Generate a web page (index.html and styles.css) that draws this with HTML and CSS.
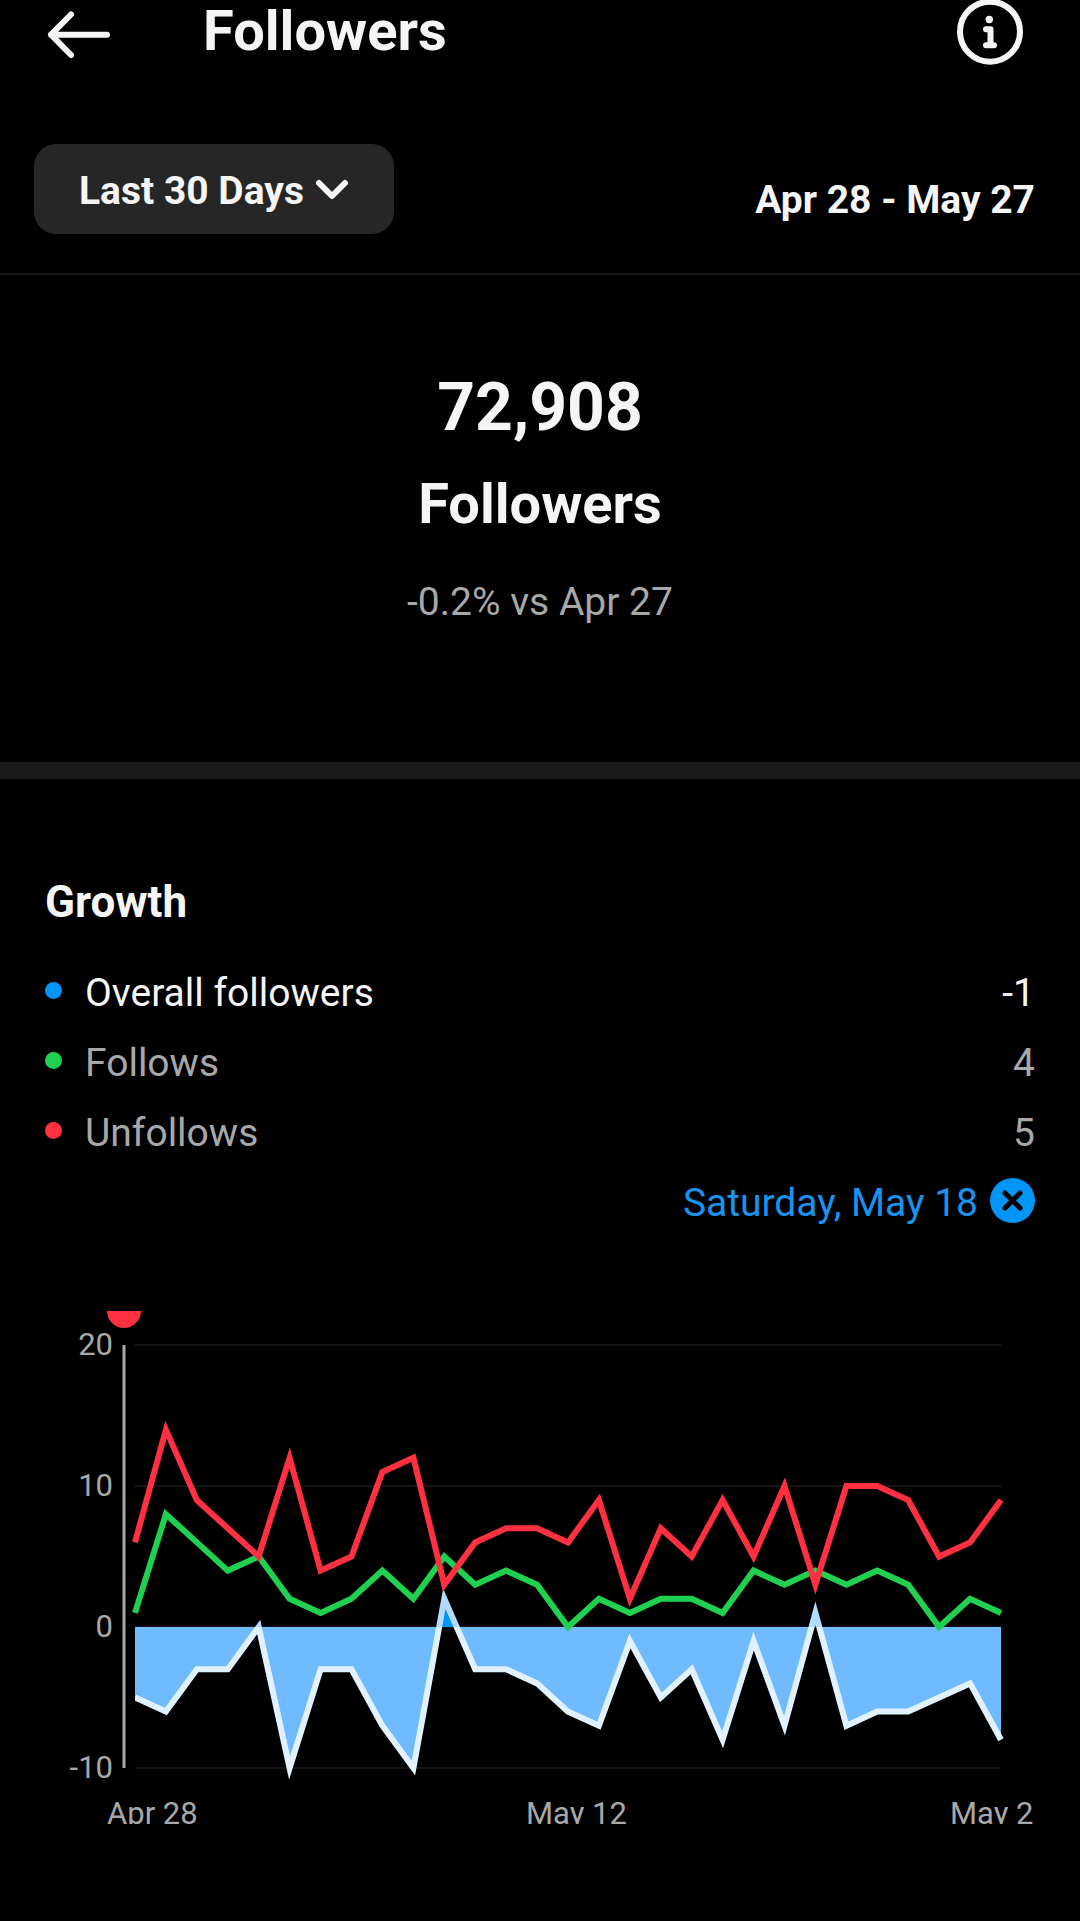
FILE: index.html
```
<!DOCTYPE html>
<html lang="en">
<head>
  <meta charset="UTF-8">
  <meta name="viewport" content="width=device-width, initial-scale=1">
  <title>Followers</title>
  <link rel="stylesheet" href="styles.css">
</head>
<body>
  <header class="topbar">
    <a href="#" class="back" aria-label="Back">
      <svg width="66" height="66" viewBox="0 0 66 66">
        <path d="M26 14.5 L6 34.7 L26 55 M6 34.7 H62"/>
      </svg>
    </a>
    <h1>Followers</h1>
    <button class="info" aria-label="Info">
      <svg width="66" height="66" viewBox="0 0 66 66">
        <circle cx="33" cy="31.7" r="30"/>
        <circle class="dot" cx="32.3" cy="19.5" r="3.7"/>
        <path d="M29 29.3 H33.5 V45 M29 45.3 H37"/>
      </svg>
    </button>
  </header>

  <div class="filter">
    <div class="period">
      <select id="period" aria-label="Period">
        <option>Last 30 Days</option>
      </select>
      <svg class="chevron" width="36" height="24" viewBox="0 0 36 24">
        <path d="M5 5 L18 18 L31 5"/>
      </svg>
    </div>
    <p class="range">Apr 28 - May 27</p>
  </div>

  <section class="summary">
    <p class="total">72,908</p>
    <h2>Followers</h2>
    <p class="change">-0.2% vs Apr 27</p>
  </section>

  <section class="growth">
    <h3>Growth</h3>
    <ul class="legend">
      <li class="active"><span class="bullet blue"></span>Overall followers<span class="value">-1</span></li>
      <li><span class="bullet green"></span>Follows<span class="value">4</span></li>
      <li><span class="bullet red"></span>Unfollows<span class="value">5</span></li>
    </ul>
    <div class="selected">
      <span>Saturday, May 18</span>
      <button class="clear" aria-label="Clear selected day">
        <svg width="45" height="45" viewBox="0 0 45 45">
          <circle cx="22.5" cy="22.5" r="22.5"/>
          <path d="M15 15 L30 30 M30 15 L15 30"/>
        </svg>
      </button>
    </div>

    <svg class="chart" viewBox="0 0 990 513">
      <defs>
        <clipPath id="above"><rect x="90" y="0" width="880" height="316"/></clipPath>
        <clipPath id="below"><rect x="90" y="316" width="880" height="197"/></clipPath>
      </defs>
      <path class="grid" d="M90 34 H956 M90 175 H956 M90 316 H956 M90 457 H956"/>
      <path class="axis" d="M79 34 V457"/>
      <circle class="marker" cx="79" cy="0" r="17"/>

      <g clip-path="url(#above)">
        <polygon class="area-up overall-area"/>
        <polyline class="line-up overall-line"/>
      </g>
      <g clip-path="url(#below)">
        <polygon class="area-down overall-area"/>
        <polyline class="line-down overall-line"/>
      </g>
      <polyline class="line-green" id="follows"/>
      <polyline class="line-red" id="unfollows"/>

      <g class="y-labels">
        <text x="68" y="44">20</text>
        <text x="68" y="185">10</text>
        <text x="68" y="326">0</text>
        <text x="68" y="467">-10</text>
      </g>
      <g class="x-labels">
        <text x="62" y="513">Apr 28</text>
        <text x="481" y="513">May 12</text>
        <text x="905" y="513">May 2</text>
      </g>
    </svg>
  </section>

  <script>
    const follows = [1, 8, 6, 4, 5, 2, 1, 2, 4, 2, 5, 3, 4, 3, 0, 2, 1, 2, 2, 1, 4, 3, 4, 3, 4, 3, 0, 2, 1];
    const unfollows = [6, 14, 9, 7, 5, 12, 4, 5, 11, 12, 3, 6, 7, 7, 6, 9, 2, 7, 5, 9, 5, 10, 3, 10, 10, 9, 5, 6, 9];
    const overall = follows.map((n, i) => n - unfollows[i]);

    // plot area: x 90-956, zero line at y 316, 14.1 per follower
    function points(data) {
      return data.map((n, i) => (90 + i * 866 / (data.length - 1)).toFixed(1) + "," + (316 - n * 14.1).toFixed(1)).join(" ");
    }

    document.getElementById("follows").setAttribute("points", points(follows));
    document.getElementById("unfollows").setAttribute("points", points(unfollows));
    document.querySelectorAll(".overall-line").forEach(function(el) {
      el.setAttribute("points", points(overall));
    });
    document.querySelectorAll(".overall-area").forEach(function(el) {
      el.setAttribute("points", "90,316 " + points(overall) + " 956,316");
    });
  </script>
</body>
</html>
```
FILE: styles.css
```
* {
  box-sizing: border-box;
}
body {
  margin: 0;
  background: #000;
  color: #f5f5f5;
  font-family: Roboto, sans-serif;
  font-size: 39px;
}
h1, h2, h3, p, ul {
  margin: 0;
  padding: 0;
}
button {
  padding: 0;
  border: none;
  background: none;
  cursor: pointer;
}
svg {
  display: block;
}

/* top bar */
.topbar {
  display: flex;
  align-items: flex-start;
  padding: 0 57px 0 45px;
}
.topbar svg {
  overflow: visible;
  fill: none;
  stroke: #f5f5f5;
  stroke-width: 6;
  stroke-linecap: round;
  stroke-linejoin: round;
}
.topbar .dot {
  fill: #f5f5f5;
  stroke: none;
}
.topbar h1 {
  flex: 1;
  margin-left: 92px;
  font-size: 56px;
  line-height: 62px;
}

/* period filter */
.filter {
  display: flex;
  justify-content: space-between;
  align-items: flex-start;
  padding: 78px 45px 39px 34px;
  border-bottom: 2px solid #1a1a1a;
}
.period {
  position: relative;
}
.period select {
  display: block;
  appearance: none;
  width: 360px;
  height: 90px;
  padding: 4px 0 0 45px;
  border: none;
  border-radius: 22px;
  background: #262626;
  color: #f5f5f5;
  font-family: inherit;
  font-size: 39px;
  font-weight: 700;
}
.chevron {
  position: absolute;
  top: 34px;
  right: 44px;
  fill: none;
  stroke: #f5f5f5;
  stroke-width: 6;
  stroke-linecap: round;
  stroke-linejoin: round;
  pointer-events: none;
}
.range {
  padding-top: 32px;
  font-weight: 700;
  line-height: 48px;
}

/* follower total */
.summary {
  padding: 93px 45px 136px;
  border-bottom: 17px solid #1a1a1a;
  text-align: center;
}
.total {
  font-size: 66px;
  font-weight: 700;
  line-height: 80px;
}
.summary h2 {
  margin-top: 20px;
  font-size: 56px;
  line-height: 72px;
}
.change {
  margin-top: 38px;
  color: #a8a8a8;
  line-height: 48px;
}

/* growth */
.growth {
  padding: 95px 45px;
}
.growth h3 {
  font-size: 44px;
  line-height: 56px;
}
.legend {
  margin-top: 28px;
  list-style: none;
}
.legend li {
  display: flex;
  align-items: center;
  color: #a8a8a8;
  line-height: 70px;
}
.legend .active {
  color: #f5f5f5;
}
.bullet {
  width: 17px;
  height: 17px;
  margin: 0 23px 6px 0;
  border-radius: 50%;
}
.blue { background: #0095f6; }
.green { background: #20d050; }
.red { background: #ff3040; }
.value {
  margin-left: auto;
}
.selected {
  display: flex;
  justify-content: flex-end;
  align-items: center;
  gap: 12px;
  color: #1893f0;
  line-height: 70px;
}
.clear {
  margin-bottom: 6px;
}
.clear circle {
  fill: #0095f6;
}
.clear path {
  stroke: #000;
  stroke-width: 5;
  stroke-linecap: round;
}

/* chart */
.chart {
  width: 100%;
  margin-top: 73px;
  overflow: hidden;
  fill: none;
  stroke-width: 6;
  stroke-miterlimit: 10;
}
.grid {
  stroke: #151515;
  stroke-width: 2;
}
.axis {
  stroke: #a8a8a8;
  stroke-width: 3;
}
.marker { fill: #ff3040; }
.area-up { fill: #0095f6; }
.area-down { fill: #70baff; }
.line-up { stroke: #b3dbff; }
.line-down { stroke: #e0f2ff; }
.line-green { stroke: #20d050; }
.line-red { stroke: #ff3040; }
.chart text {
  fill: #a8a8a8;
  font-size: 31px;
}
.y-labels {
  text-anchor: end;
}
```
